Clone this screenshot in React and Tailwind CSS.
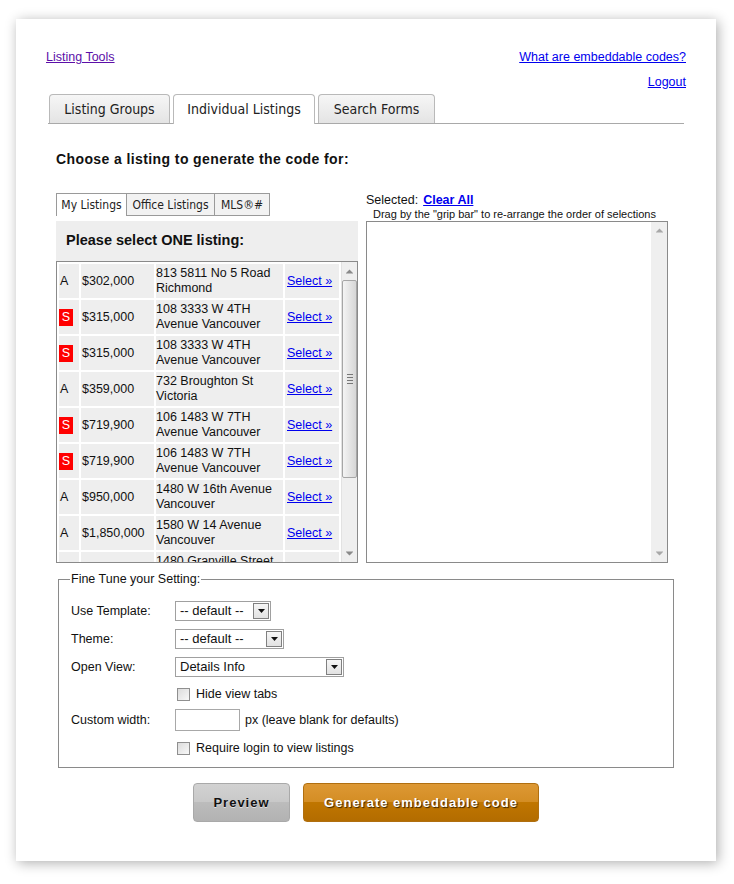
import React from 'react';

const listings = [
  { st: 'A', price: '$302,000', addr: ['813 5811 No 5 Road', 'Richmond'] },
  { st: 'S', price: '$315,000', addr: ['108 3333 W 4TH', 'Avenue Vancouver'] },
  { st: 'S', price: '$315,000', addr: ['108 3333 W 4TH', 'Avenue Vancouver'] },
  { st: 'A', price: '$359,000', addr: ['732 Broughton St', 'Victoria'] },
  { st: 'S', price: '$719,900', addr: ['106 1483 W 7TH', 'Avenue Vancouver'] },
  { st: 'S', price: '$719,900', addr: ['106 1483 W 7TH', 'Avenue Vancouver'] },
  { st: 'A', price: '$950,000', addr: ['1480 W 16th Avenue', 'Vancouver'] },
  { st: 'A', price: '$1,850,000', addr: ['1580 W 14 Avenue', 'Vancouver'] },
  { st: '', price: '', addr: ['1480 Granville Street', '\u00a0'] },
];

const tabFont = "font-['DejaVu_Sans_Condensed','DejaVu_Sans',sans-serif] [font-stretch:condensed]";

function Tri({ up = false, color = '#8a8a8a' }) {
  return (
    <svg width="7" height="5" viewBox="0 0 7 5">
      {up ? (
        <path d="M0 4L3.5 0.5L7 4Z M0 4.5H7V5H0Z" fill={color} />
      ) : (
        <path d="M0 0H7V0.5H0Z M0 1L3.5 4.5L7 1Z" fill={color} />
      )}
    </svg>
  );
}

function Select({ width, value }) {
  return (
    <div className={`flex items-center h-[20px] border border-[#a0a0a0] bg-white ${width}`}>
      <span className="flex-1 pl-[4px] text-[13px] leading-[16px] text-[#111]">{value}</span>
      <span className="flex items-center justify-center w-[16px] h-[16px] mr-[1px] border border-[#808080] bg-[linear-gradient(#f6f6f6,#e2e2e2)]">
        <svg width="7" height="4" viewBox="0 0 7 4"><path d="M0 0H7L3.5 4Z" fill="#111" /></svg>
      </span>
    </div>
  );
}

function Checkbox() {
  return (
    <span className="block w-[13px] h-[13px] ml-[2px] border border-[#8f8f8f] bg-[linear-gradient(135deg,#dcdcdc,#f8f8f8)]" />
  );
}

export default function App() {
  return (
    <div className="min-h-[884px] bg-white pt-[19px] pl-[16px] font-['Liberation_Sans',Arial,sans-serif] text-[12.5px] text-[#111]">
      <div className="w-[700px] h-[842px] bg-white shadow-[2px_2px_12px_rgba(0,0,0,0.32)] pt-[31px] px-[30px]">
        {/* top links */}
        <div className="flex justify-between h-[14px] leading-[14px]">
          <a href="#" className="text-[#5c0fa8] underline">Listing Tools</a>
          <a href="#" className="text-[#0000ee] underline">What are embeddable codes?</a>
        </div>
        <div className="mt-[11px] h-[14px] leading-[14px] text-right">
          <a href="#" className="text-[#0000ee] underline">Logout</a>
        </div>

        {/* main tabs */}
        <div className={`mt-[5px] mx-[2px] flex items-end gap-[3px] pl-[1px] h-[30px] border-b border-[#a9a9a9] ${tabFont} text-[14px] text-[#222]`}>
          <div className="w-[121px] h-[29px] flex items-center justify-center rounded-t-[4px] border border-b-0 border-[#b9b9b9] bg-[linear-gradient(#f6f6f6,#e4e4e4)]">Listing Groups</div>
          <div className="w-[142px] h-[30px] -mb-[1px] flex items-center justify-center rounded-t-[4px] border border-b-0 border-[#b9b9b9] bg-white">Individual Listings</div>
          <div className="w-[117px] h-[29px] flex items-center justify-center rounded-t-[4px] border border-b-0 border-[#b9b9b9] bg-[linear-gradient(#f6f6f6,#e4e4e4)]">Search Forms</div>
        </div>

        <div className="mx-[2px] pl-[8px]">
          <h2 className="mt-[27px] h-[16px] leading-[16px] text-[14px] font-bold tracking-[0.4px]">Choose a listing to generate the code for:</h2>

          <div className="mt-[26px] flex gap-[8px]">
            {/* left: listing picker */}
            <div className="w-[302px]">
              <div className={`flex h-[23px] ${tabFont} text-[12px] text-[#222]`}>
                <div className="w-[71px] h-[23px] flex items-center justify-center border border-b-0 border-[#9a9a9a] bg-white">My Listings</div>
                <div className="w-[88px] h-[23px] flex items-center justify-center border border-l-0 border-[#9a9a9a] bg-[#f2f2f2]">Office Listings</div>
                <div className="w-[55px] h-[23px] flex items-center justify-center border border-l-0 border-[#9a9a9a] bg-[#f2f2f2]">MLS®#</div>
              </div>
              <div className="mt-[5px] h-[40px] bg-[#eeeeee] flex items-center pl-[10px] text-[14.5px] font-bold">Please select ONE listing:</div>
              <div className="h-[302px] border border-[#8a8a8a] flex overflow-hidden">
                <div className="w-[284px] h-[300px] overflow-hidden">
                  <table className="border-separate border-spacing-[2px] w-[284px] table-fixed">
                    <colgroup>
                      <col className="w-[20px]" />
                      <col className="w-[73px]" />
                      <col className="w-[127px]" />
                      <col className="w-[54px]" />
                    </colgroup>
                    <tbody>
                      {listings.map((l, i) => (
                        <tr key={i} className="h-[34px]">
                          <td className="bg-[#eeeeee] align-middle p-0">
                            {l.st === 'S' ? (
                              <span className="flex items-center justify-center w-[14px] h-[17px] bg-[#ff0000] text-white">S</span>
                            ) : (
                              <span className="pl-[1px]">{l.st}</span>
                            )}
                          </td>
                          <td className="bg-[#eeeeee] align-middle p-0 pl-[1px] whitespace-nowrap">{l.price}</td>
                          <td className="bg-[#eeeeee] align-middle p-0 leading-[15px] whitespace-nowrap">
                            {l.addr[0]}<br />{l.addr[1]}
                          </td>
                          <td className="bg-[#eeeeee] align-middle p-0 pl-[2px] whitespace-nowrap">
                            {l.price && <a href="#" className="text-[#0000ee] underline">Select »</a>}
                          </td>
                        </tr>
                      ))}
                    </tbody>
                  </table>
                </div>
                {/* scrollbar */}
                <div className="w-[16px] h-[300px] bg-[#efefef] border-l border-[#e2e2e2] flex flex-col items-center">
                  <div className="h-[18px] flex items-center justify-center"><Tri up /></div>
                  <div className="w-[15px] h-[198px] rounded-[2px] border border-[#a6a6a6] bg-[linear-gradient(90deg,#f4f4f4,#d6d6d6)] flex flex-col items-center justify-center gap-[2px]">
                    <span className="block w-[6px] h-px bg-[#777]" />
                    <span className="block w-[6px] h-px bg-[#777]" />
                    <span className="block w-[6px] h-px bg-[#777]" />
                    <span className="block w-[6px] h-px bg-[#777]" />
                  </div>
                  <div className="flex-1" />
                  <div className="h-[18px] flex items-center justify-center"><Tri /></div>
                </div>
              </div>
            </div>

            {/* right: selections */}
            <div className="w-[302px]">
              <div className="h-[14px] leading-[14px] flex gap-[5px]">
                <span>Selected:</span>
                <a href="#" className="text-[#0000ee] underline font-bold">Clear All</a>
              </div>
              <div className="h-[14px] leading-[14px] pl-[7px] text-[11px]">Drag by the "grip bar" to re-arrange the order of selections</div>
              <div className="h-[342px] border border-[#8a8a8a] bg-white flex justify-end">
                <div className="w-[16px] h-[340px] bg-[#efefef] flex flex-col items-center justify-between py-[6px]">
                  <Tri up color="#a8a8a8" />
                  <Tri color="#a8a8a8" />
                </div>
              </div>
            </div>
          </div>

          {/* settings */}
          <fieldset className="mt-[9px] ml-[2px] w-[616px] border border-[#8a8a8a] pl-[12px] pt-[15px] pb-[9px]">
            <legend className="px-[1px] -ml-[1px] leading-[14px]">Fine Tune your Setting:</legend>
            <div className="flex flex-col">
              <div className="flex items-center h-[20px]">
                <span className="w-[104px]">Use Template:</span>
                <Select width="w-[96px]" value="-- default --" />
              </div>
              <div className="flex items-center h-[20px] mt-[8px]">
                <span className="w-[104px]">Theme:</span>
                <Select width="w-[109px]" value="-- default --" />
              </div>
              <div className="flex items-center h-[20px] mt-[8px]">
                <span className="w-[104px]">Open View:</span>
                <Select width="w-[169px]" value="Details Info" />
              </div>
              <div className="flex items-center h-[20px] mt-[7px] pl-[104px] gap-[6px]">
                <Checkbox />
                <span>Hide view tabs</span>
              </div>
              <div className="flex items-center h-[22px] mt-[5px]">
                <span className="w-[104px]">Custom width:</span>
                <span className="block w-[65px] h-[22px] border border-[#a8a8a8] bg-white" />
                <span className="ml-[5px]">px (leave blank for defaults)</span>
              </div>
              <div className="flex items-center h-[20px] mt-[7px] pl-[104px] gap-[6px]">
                <Checkbox />
                <span>Require login to view listings</span>
              </div>
            </div>
          </fieldset>
        </div>

        {/* actions */}
        <div className="mt-[15px] flex justify-center gap-[13px]">
          <button className="w-[97px] h-[39px] rounded-[4px] border border-[#a9a9a9] bg-[linear-gradient(#d2d2d2_0%,#c8c8c8_50%,#bcbcbc_50%,#b2b2b2_100%)] text-[13px] font-bold tracking-[1px] text-[#111] [text-shadow:0_1px_0_rgba(255,255,255,0.6)]">
            Preview
          </button>
          <button className="w-[236px] h-[39px] rounded-[4px] border border-[#b06f10] bg-[linear-gradient(#dd9834_0%,#d38d24_50%,#c07600_50%,#b36c00_100%)] text-[13px] font-bold tracking-[1px] text-white [text-shadow:1px_1px_1px_rgba(0,0,0,0.7)]">
            Generate embeddable code
          </button>
        </div>
      </div>
    </div>
  );
}
